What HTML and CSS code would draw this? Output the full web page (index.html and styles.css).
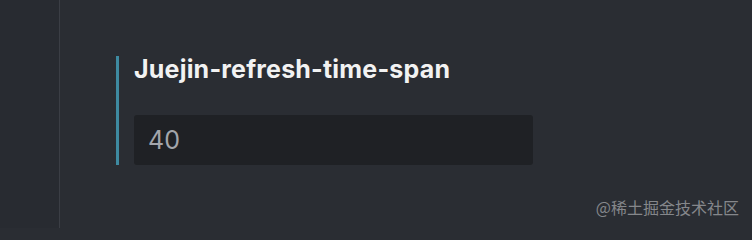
FILE: index.html
```html
<!DOCTYPE html>
<html>
<head>
<meta charset="utf-8">
<link rel="stylesheet" href="styles.css">
</head>
<body>
<div class="app">
  <div class="side"></div>
  <div class="main">
    <div class="setting">
      <div class="title">Juejin-refresh-time-span</div>
      <div class="input">40</div>
    </div>
  </div>
</div>
<div class="mark">@稀土掘金技术社区</div>
</body>
</html>
```
FILE: styles.css
```css
html, body {
  margin: 0;
  padding: 0;
  width: 752px;
  height: 228px;
  overflow: hidden;
  background: #2a2d33;
  font-family: Inter, "Noto Sans", sans-serif;
}
.app {
  display: flex;
  height: 228px;
}
.side {
  width: 59px;
  flex: none;
  background: #282b31;
  border-right: 1px solid #3b3e45;
}
.main {
  flex: 1;
  padding: 56px 0 0 56px;
}
.setting {
  border-left: 3px solid #3e8aa1;
  padding-left: 15px;
  height: 109px;
  box-sizing: border-box;
}
.title {
  color: #f2f2f2;
  font-weight: 700;
  font-size: 25px;
  line-height: 26px;
  letter-spacing: 0.2px;
}
.input {
  margin-top: 33px;
  width: 399px;
  height: 50px;
  box-sizing: border-box;
  background: #1f2125;
  border-radius: 3px;
  padding-left: 14px;
  color: #a3a6ac;
  font-size: 25px;
  line-height: 50px;
}
.mark {
  position: absolute;
  right: 13px;
  top: 197px;
  color: #85878b;
  font-size: 16px;
  line-height: 20px;
  font-family: "Noto Sans CJK SC", sans-serif;
}
```
